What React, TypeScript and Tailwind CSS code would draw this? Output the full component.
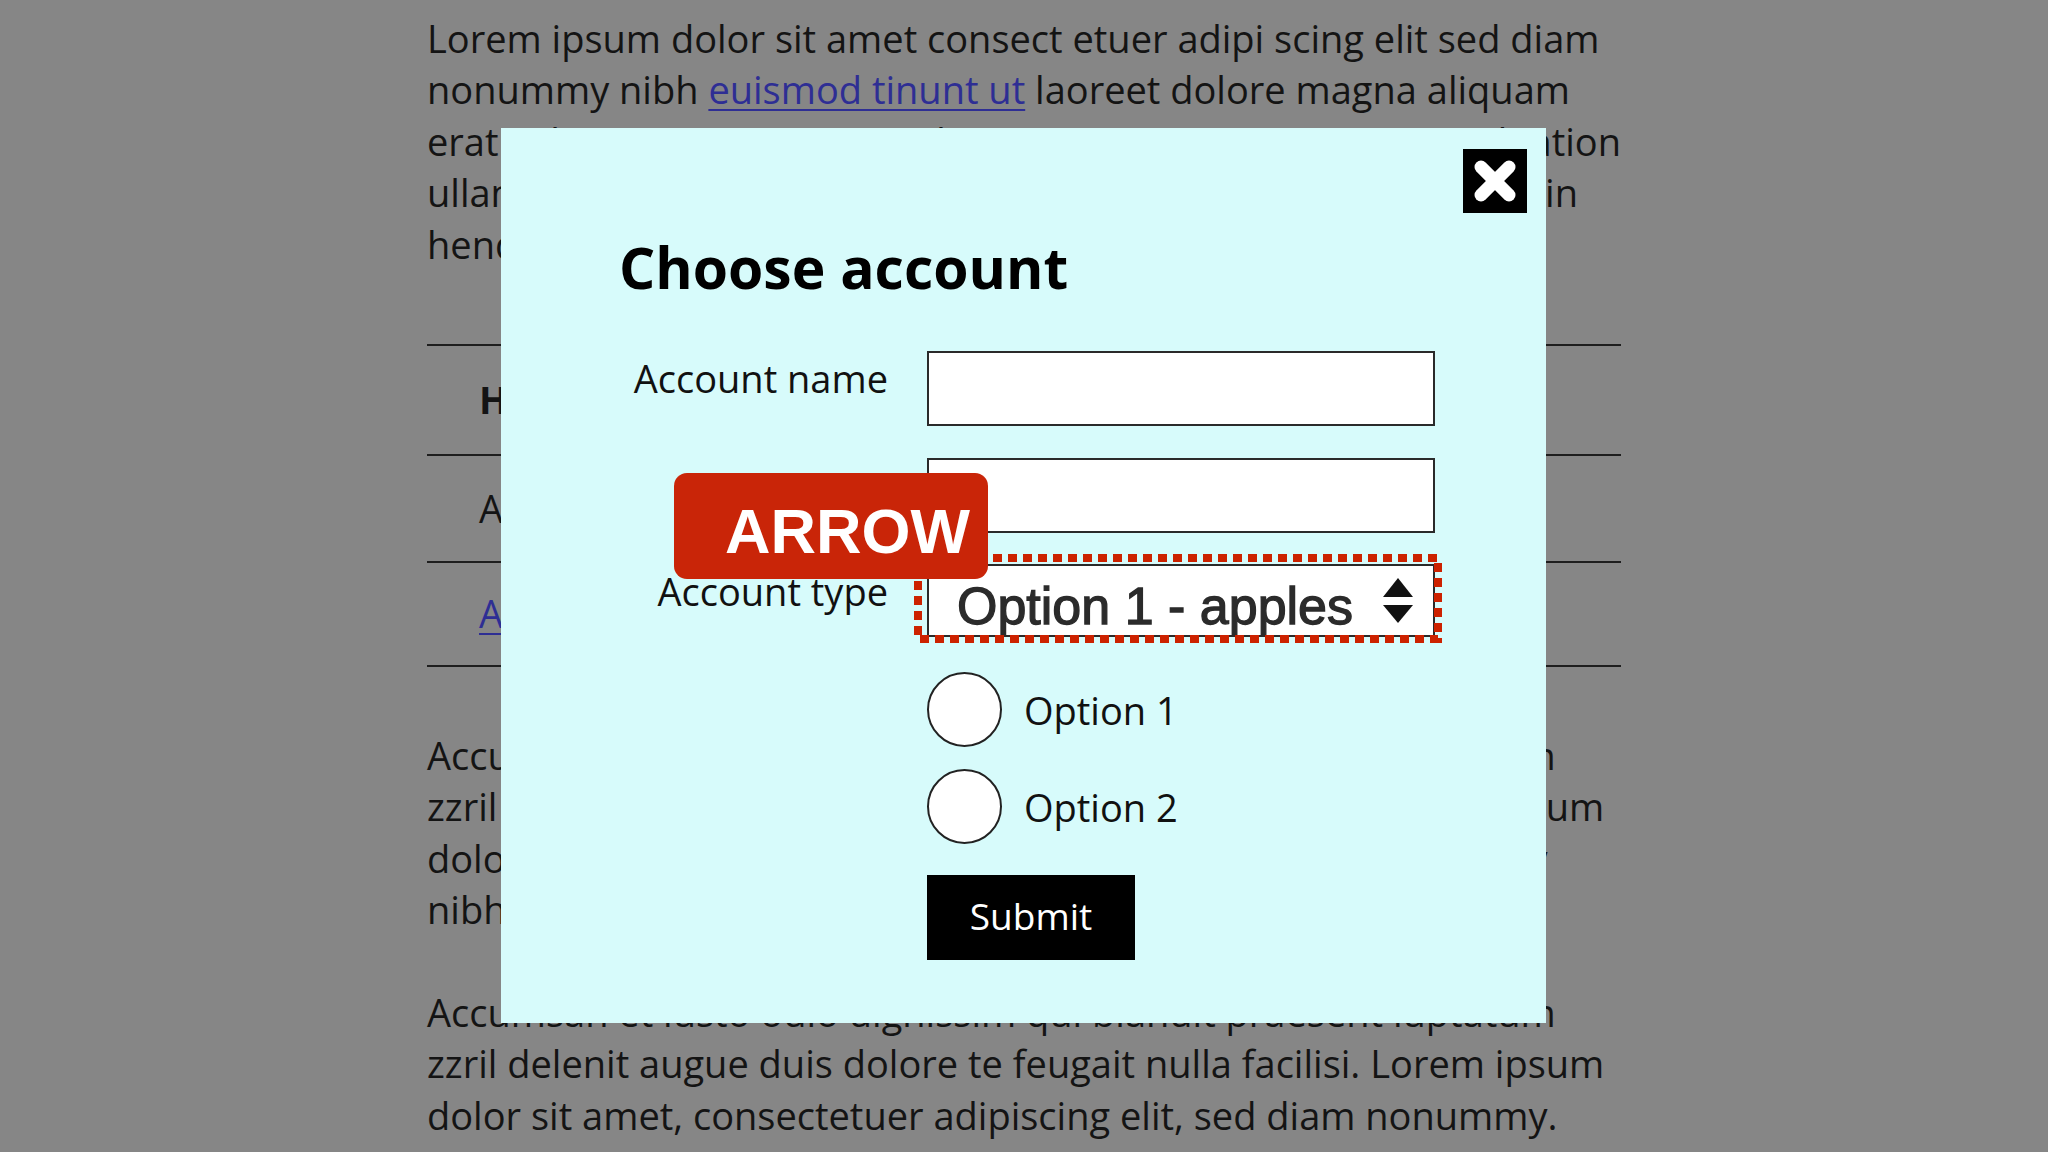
import React from "react";

const Line = ({ children }: { children: React.ReactNode }) => (
  <div className="h-[51.4px] leading-[51.4px] whitespace-nowrap">{children}</div>
);

const Split = ({ left, right, mr = "" }: { left: string; right: string; mr?: string }) => (
  <div className="h-[51.4px] leading-[51.4px] whitespace-nowrap flex justify-between">
    <span>{left}</span>
    <span className={mr}>{right}</span>
  </div>
);

export default function App() {
  return (
    <div className="relative w-[2048px] h-[1152px] overflow-hidden bg-[#868686] text-[#141414] font-['Open_Sans',sans-serif]">
      {/* background page */}
      <div className="w-[1621px] pl-[427px] pt-[13px] text-[38px]">
        <Line>Lorem ipsum dolor sit amet consect etuer adipi scing elit sed diam</Line>
        <Line>
          nonummy nibh <a className="text-[#2e2e94] underline decoration-2 underline-offset-[5px]">euismod tinunt ut</a> laoreet dolore magna aliquam
        </Line>
        <Split left="erat volutpat. Ut wisi enim ad minim" right="veniam, quis nostrud tation" />
        <Split left="ullamcorper suscipit lobortis" right="nisl ut aliquip ex ea dolor in" mr="mr-[43px]" />
        <Line>hendrerit in vulputate velit esse molestie consequat.</Line>

        <div className="mt-[74px] border-t-2 border-[#1e1e1e]">
          <div className="h-[108px] flex items-center pl-[52px] font-bold">Header</div>
          <div className="h-[107px] border-t-2 border-[#1e1e1e] flex items-center pl-[52px]">Account 1</div>
          <div className="h-[106px] border-t-2 border-[#1e1e1e] border-b-2 flex items-center pl-[52px]">
            <a className="text-[#2e2e94] underline decoration-2 underline-offset-[5px]">Account 2</a>
          </div>
        </div>

        <div className="mt-[63px]">
          <Line>Accumsan et iusto odio dignissim qui blandit praesent luptatum</Line>
          <Line>zzril delenit augue duis dolore te feugait nulla facilisi. Lorem ipsum</Line>
          <Line>dolor sit amet, consectetuer adipiscing elit, sed diam nonummy</Line>
          <Line>nibh euismod tincidunt ut laoreet dolore.</Line>
        </div>
        <div className="mt-[51.4px]">
          <Line>Accumsan et iusto odio dignissim qui blandit praesent luptatum</Line>
          <Line>zzril delenit augue duis dolore te feugait nulla facilisi. Lorem ipsum</Line>
          <Line>dolor sit amet, consectetuer adipiscing elit, sed diam nonummy.</Line>
        </div>
      </div>

      {/* modal */}
      <div className="absolute left-[501px] top-[128px] w-[1045px] h-[895px] bg-[#d7fbfb] text-[#111]">
        <div className="flex justify-end pt-[21px] pr-[19px]">
          <button className="w-[64px] h-[64px] bg-black flex items-center justify-center">
            <svg width="64" height="64" viewBox="0 0 64 64">
              <line x1="18" y1="18" x2="46" y2="46" stroke="white" strokeWidth="13" strokeLinecap="round" />
              <line x1="46" y1="18" x2="18" y2="46" stroke="white" strokeWidth="13" strokeLinecap="round" />
            </svg>
          </button>
        </div>

        <h1 className="mt-[21px] pl-[118px] text-[57px] leading-[67px] font-bold text-black">Choose account</h1>

        <div className="mt-[50px] pl-[118px] text-[38px] leading-[44px]">
          <div className="flex gap-[39px]">
            <label className="w-[269px] text-right pt-[5px] whitespace-nowrap">Account name</label>
            <div className="w-[508px] h-[75px] border-2 border-[#2a2a2a] bg-white" />
          </div>
          <div className="flex gap-[39px] mt-[32px]">
            <label className="w-[269px] text-right pt-[8px] whitespace-nowrap">Account no</label>
            <div className="w-[508px] h-[75px] border-2 border-[#2a2a2a] bg-white" />
          </div>
          <div className="flex gap-[39px] mt-[31px]">
            <label className="w-[269px] text-right pt-[5px] whitespace-nowrap">Account type</label>
            <div className="relative w-[508px] h-[73px]">
              <div className="w-full h-full border-2 border-[#2a2a2a] bg-white flex items-center justify-between pl-[28px] pr-[20px]">
                <span className="mt-[10px] font-['Liberation_Sans',Arial,sans-serif] text-[52px] leading-none text-[#2b2b2b] [-webkit-text-stroke:1.3px_#2b2b2b]">
                  Option 1 - apples
                </span>
                <svg width="30" height="46" viewBox="0 0 30 46">
                  <polygon points="15,0 30,19 0,19" fill="#111" />
                  <polygon points="0,27 30,27 15,45" fill="#111" />
                </svg>
              </div>
              <svg className="absolute left-[-13px] top-[-10px]" width="528" height="89" viewBox="0 0 528 89">
                <rect x="4" y="4" width="520" height="81" fill="none" stroke="#cc2200" strokeWidth="8" strokeDasharray="9 6" />
              </svg>
            </div>
          </div>

          <div className="pl-[308px]">
            <div className="mt-[35px] flex items-center gap-[22px]">
              <span className="w-[75px] h-[75px] rounded-full border-2 border-[#222] bg-white" />
              <span>Option 1</span>
            </div>
            <div className="mt-[22px] flex items-center gap-[22px]">
              <span className="w-[75px] h-[75px] rounded-full border-2 border-[#222] bg-white" />
              <span>Option 2</span>
            </div>
            <button className="mt-[31px] w-[208px] h-[85px] bg-black text-white text-[37px] flex items-center justify-center pb-[4px]">
              Submit
            </button>
          </div>
        </div>

        {/* annotation badge */}
        <div className="absolute left-[173px] top-[345px] w-[314px] h-[106px] rounded-[13px] bg-[#c92508] flex items-center justify-end pr-[18px]">
          <span className="mt-[10px] font-['Liberation_Sans',Arial,sans-serif] font-bold text-[63px] leading-none text-white">ARROW</span>
        </div>
      </div>
    </div>
  );
}
